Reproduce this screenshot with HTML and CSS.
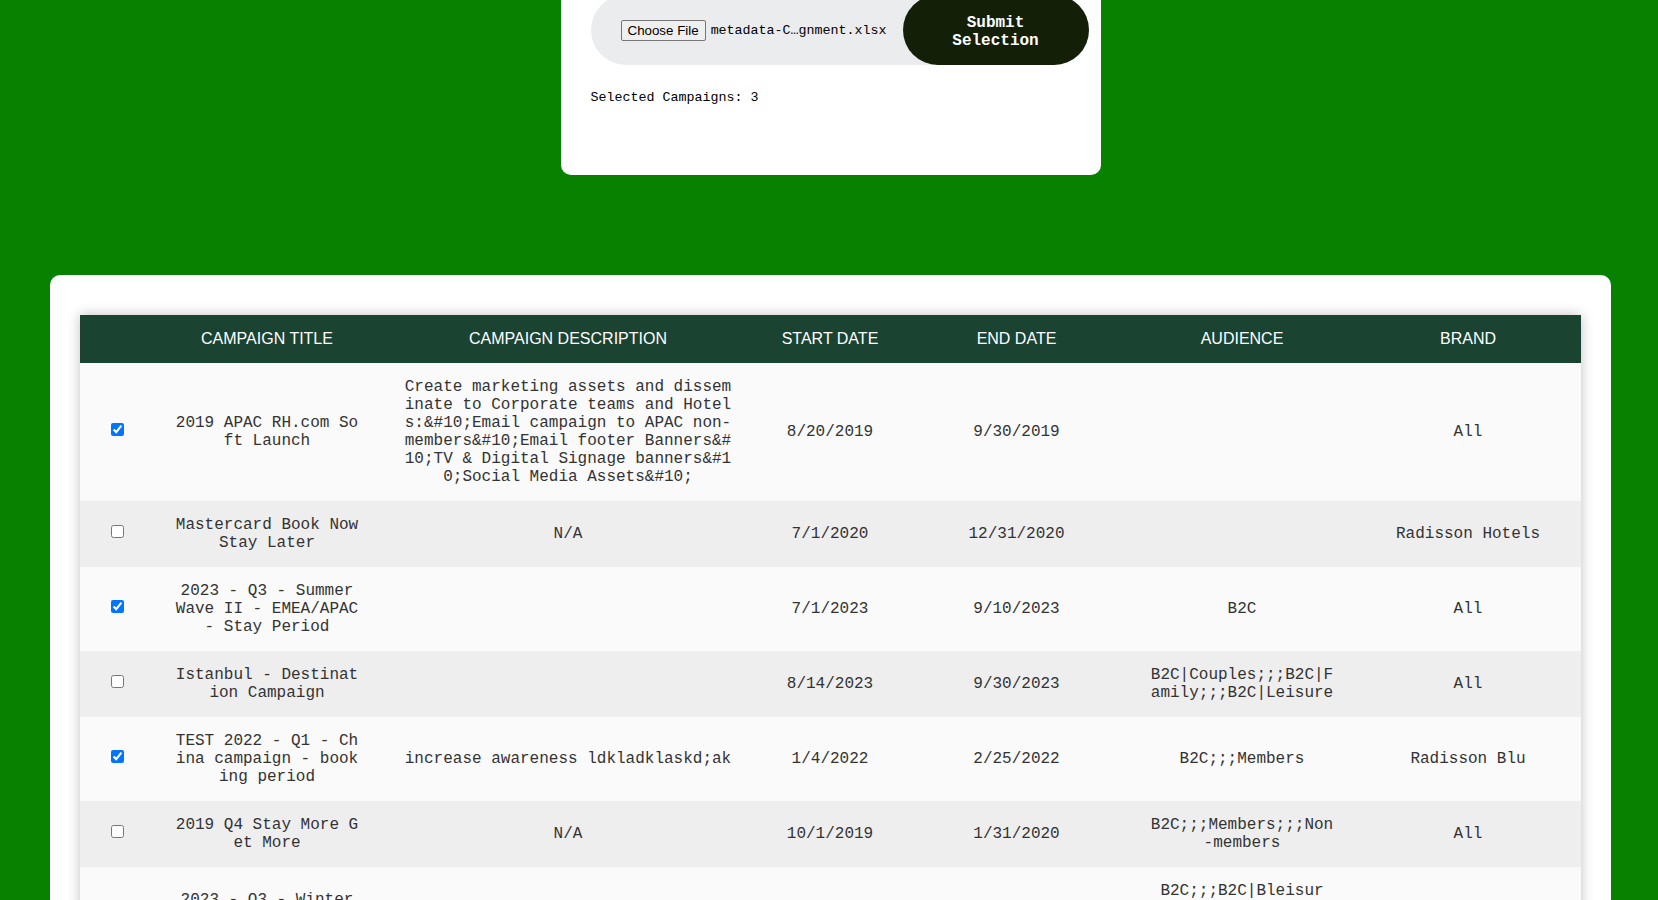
FILE: index.html
```html
<!DOCTYPE html>
<html lang="en">
<head>
<meta charset="utf-8">
<title>Campaign Selection</title>
<link rel="stylesheet" href="styles.css">
</head>
<body>
<div class="page">
  <section class="upload-card">
    <div class="upload-bar">
      <div class="file-field">
        <button class="file-btn" type="button">Choose File</button>
        <span class="file-name">metadata-C…gnment.xlsx</span>
      </div>
      <button class="submit-btn" type="button">Submit<br>Selection</button>
    </div>
    <p class="selected-count">Selected Campaigns: 3</p>
  </section>

  <section class="table-card">
    <table class="campaigns">
      <colgroup>
        <col class="c-check">
        <col class="c-title">
        <col class="c-desc">
        <col class="c-start">
        <col class="c-end">
        <col class="c-aud">
        <col class="c-brand">
      </colgroup>
      <thead>
        <tr>
          <th></th>
          <th>Campaign Title</th>
          <th>Campaign Description</th>
          <th>Start Date</th>
          <th>End Date</th>
          <th>Audience</th>
          <th>Brand</th>
        </tr>
      </thead>
      <tbody>
        <tr>
          <td><input type="checkbox" checked></td>
          <td>2019 APAC RH.com Soft Launch</td>
          <td>Create marketing assets and disseminate to Corporate teams and Hotels:&amp;#10;Email campaign to APAC non-members&amp;#10;Email footer Banners&amp;#10;TV &amp; Digital Signage banners&amp;#10;Social Media Assets&amp;#10;</td>
          <td>8/20/2019</td>
          <td>9/30/2019</td>
          <td></td>
          <td>All</td>
        </tr>
        <tr>
          <td><input type="checkbox"></td>
          <td>Mastercard Book Now Stay Later</td>
          <td>N/A</td>
          <td>7/1/2020</td>
          <td>12/31/2020</td>
          <td></td>
          <td>Radisson Hotels</td>
        </tr>
        <tr>
          <td><input type="checkbox" checked></td>
          <td>2023 - Q3 - Summer Wave II - EMEA/APAC - Stay Period</td>
          <td></td>
          <td>7/1/2023</td>
          <td>9/10/2023</td>
          <td>B2C</td>
          <td>All</td>
        </tr>
        <tr>
          <td><input type="checkbox"></td>
          <td>Istanbul - Destination Campaign</td>
          <td></td>
          <td>8/14/2023</td>
          <td>9/30/2023</td>
          <td>B2C|Couples;;;B2C|Family;;;B2C|Leisure</td>
          <td>All</td>
        </tr>
        <tr>
          <td><input type="checkbox" checked></td>
          <td>TEST 2022 - Q1 - China campaign - booking period</td>
          <td>increase awareness ldkladklaskd;ak</td>
          <td>1/4/2022</td>
          <td>2/25/2022</td>
          <td>B2C;;;Members</td>
          <td>Radisson Blu</td>
        </tr>
        <tr>
          <td><input type="checkbox"></td>
          <td>2019 Q4 Stay More Get More</td>
          <td>N/A</td>
          <td>10/1/2019</td>
          <td>1/31/2020</td>
          <td>B2C;;;Members;;;Non-members</td>
          <td>All</td>
        </tr>
        <tr>
          <td><input type="checkbox"></td>
          <td>2023 - Q3 - Winter Wave - EMEA/APAC - Stay Period - Members Only</td>
          <td></td>
          <td>11/1/2023</td>
          <td>2/29/2024</td>
          <td>B2C;;;B2C|Bleisure;;;B2C|Couples;;;B2C|Family;;;B2C|Leisure;;;Members;;;Non-members</td>
          <td>All</td>
        </tr>
        <tr>
          <td><input type="checkbox"></td>
          <td>2022 Q2 Spring Sale</td>
          <td>N/A</td>
          <td>4/1/2022</td>
          <td>5/31/2022</td>
          <td>B2C</td>
          <td>All</td>
        </tr>
      </tbody>
    </table>
  </section>
</div>
</body>
</html>
```

FILE: styles.css
```css
html, body {
  margin: 0;
  padding: 0;
}

body {
  background: #088000;
  font-family: "Liberation Mono", "Courier New", monospace;
  color: #000;
}

.page {
  width: 1561px;
  margin-left: 50px;
  padding-bottom: 60px;
}

/* ---------- Upload card ---------- */
.upload-card {
  width: 540px;
  box-sizing: border-box;
  margin: -40px auto 0;
  padding: 35px 12px 70px 30px;
  background: #ffffff;
  border-radius: 10px;
}

.upload-bar {
  display: flex;
  align-items: center;
  width: 498px;
  height: 70px;
  box-sizing: border-box;
  padding-left: 30px;
  background: #ebecee;
  border-radius: 35px;
}

.file-field {
  display: flex;
  align-items: center;
}

.file-btn {
  font-family: "Liberation Sans", Arial, sans-serif;
  font-size: 13.333px;
  line-height: 17px;
  color: #000;
  background: #efefef;
  border: 1px solid #767676;
  border-radius: 2px;
  padding: 1px 6px;
  margin: 0 5px 0 0;
}

.file-name {
  font-family: "Liberation Mono", "Courier New", monospace;
  font-size: 13.333px;
  color: #000;
  padding-top: 1px;
}

.submit-btn {
  margin-left: auto;
  width: 186px;
  height: 70px;
  box-sizing: border-box;
  border: none;
  border-radius: 35px;
  background: #141f08;
  color: #ffffff;
  font-family: "Liberation Mono", "Courier New", monospace;
  font-weight: bold;
  font-size: 16px;
  line-height: 18px;
  padding: 4px 0 0;
}

.selected-count {
  margin: 25px 0 0;
  font-size: 13.333px;
  line-height: 15px;
  color: #000;
}

/* ---------- Table card ---------- */
.table-card {
  margin-top: 100px;
  background: #ffffff;
  border-radius: 10px;
  padding: 40px 30px;
}

.campaigns {
  width: 1501px;
  border-collapse: collapse;
  table-layout: fixed;
  box-shadow: 0 0 12px rgba(0, 0, 0, 0.25);
}

.c-check { width: 74px; }
.c-title { width: 226px; }
.c-desc  { width: 376px; }
.c-start { width: 148px; }
.c-end   { width: 225px; }
.c-aud   { width: 226px; }
.c-brand { width: 226px; }

.campaigns th {
  background: #1b4332;
  color: #ffffff;
  font-family: "Liberation Sans", Arial, sans-serif;
  font-weight: normal;
  font-size: 16px;
  line-height: 18px;
  text-transform: uppercase;
  padding: 15px 21px;
  text-align: center;
}

.campaigns td {
  font-family: "Liberation Mono", "Courier New", monospace;
  font-size: 16px;
  line-height: 18px;
  color: #333;
  padding: 15px 21px;
  text-align: center;
  vertical-align: middle;
  word-break: break-all;
}

.campaigns tbody tr:nth-child(odd) {
  background: #fafafa;
}

.campaigns tbody tr:nth-child(even) {
  background: #eeeeee;
}

.campaigns input[type="checkbox"] {
  margin: 0 0 5px 1px;
  width: 13px;
  height: 13px;
  vertical-align: middle;
}
```
